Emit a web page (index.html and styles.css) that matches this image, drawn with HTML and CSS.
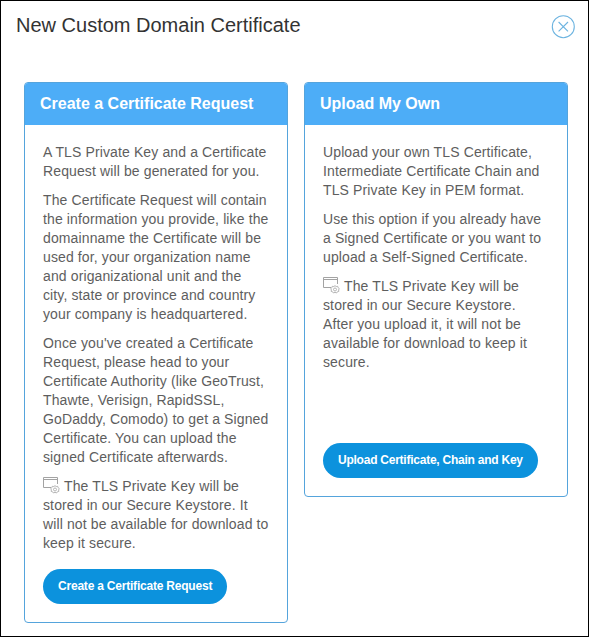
FILE: index.html
```html
<!DOCTYPE html>
<html lang="en">
<head>
<meta charset="utf-8">
<title>New Custom Domain Certificate</title>
<link rel="stylesheet" href="styles.css">
</head>
<body>
<main class="dialog">
  <header class="dialog-header">
    <h1>New Custom Domain Certificate</h1>
    <button class="close" aria-label="Close">
      <svg width="24" height="24" viewBox="0 0 24 24"><circle cx="12.3" cy="11.7" r="11"/><path d="M7.6 7l9.4 9.4M17 7l-9.4 9.4"/></svg>
    </button>
  </header>
  <div class="cards">
    <section class="card">
      <h2>Create a Certificate Request</h2>
      <div class="card-body">
        <p>A TLS Private Key and a Certificate<br>Request will be generated for you.</p>
        <p>The Certificate Request will contain<br>the information you provide, like the<br>domainname the Certificate will be<br>used for, your organization name<br>and origanizational unit and the<br>city, state or province and country<br>your company is headquartered.</p>
        <p>Once you've created a Certificate<br>Request, please head to your<br>Certificate Authority (like GeoTrust,<br>Thawte, Verisign, RapidSSL,<br>GoDaddy, Comodo) to get a Signed<br>Certificate. You can upload the<br>signed Certificate afterwards.</p>
        <p><svg class="keystore" width="17" height="17" viewBox="0 0 17 17"><path d="M8 10.5H.5V.5h14v6.5M.5 2.5h14"/><path class="gear" d="M12 8.7l1.2.8 1.5-.2.4 1.4 1.2.9-.7 1.3.2 1.5-1.4.4-.9 1.2-1.5-.7-1.5.7-.9-1.2-1.4-.4.2-1.5-.7-1.3 1.2-.9.4-1.4 1.5.2z"/><circle class="gear" cx="12" cy="12.5" r="1.5"/></svg>The TLS Private Key will be<br>stored in our Secure Keystore. It<br>will not be available for download to<br>keep it secure.</p>
        <button class="action">Create a Certificate Request</button>
      </div>
    </section>
    <section class="card">
      <h2>Upload My Own</h2>
      <div class="card-body">
        <p>Upload your own TLS Certificate,<br>Intermediate Certificate Chain and<br>TLS Private Key in PEM format.</p>
        <p>Use this option if you already have<br>a Signed Certificate or you want to<br>upload a Self-Signed Certificate.</p>
        <p><svg class="keystore" width="17" height="17" viewBox="0 0 17 17"><path d="M8 10.5H.5V.5h14v6.5M.5 2.5h14"/><path class="gear" d="M12 8.7l1.2.8 1.5-.2.4 1.4 1.2.9-.7 1.3.2 1.5-1.4.4-.9 1.2-1.5-.7-1.5.7-.9-1.2-1.4-.4.2-1.5-.7-1.3 1.2-.9.4-1.4 1.5.2z"/><circle class="gear" cx="12" cy="12.5" r="1.5"/></svg>The TLS Private Key will be<br>stored in our Secure Keystore.<br>After you upload it, it will not be<br>available for download to keep it<br>secure.</p>
        <button class="action upload">Upload Certificate, Chain and Key</button>
      </div>
    </section>
  </div>
</main>
</body>
</html>
```
FILE: styles.css
```css
* { box-sizing: border-box; }
body {
  margin: 0;
  background: #fff;
  font-family: "Liberation Sans", Arial, sans-serif;
  color: #5e5e5e;
}
.dialog {
  height: 637px;
  border: 1px solid #000;
}
.dialog-header {
  height: 81px;
  padding: 12px 13px 0 15px;
  display: flex;
  justify-content: space-between;
  align-items: flex-start;
}
h1 {
  margin: 0;
  font-size: 20px;
  line-height: 24px;
  font-weight: 400;
  color: #333;
}
.close {
  width: 24px;
  height: 24px;
  margin-top: 2px;
  padding: 0;
  border: 0;
  background: none;
}
.close svg { display: block; fill: none; stroke: #6db4e0; stroke-width: 1.1; }
.cards {
  display: flex;
  align-items: flex-start;
  gap: 16px;
  padding-left: 23px;
}
.card {
  width: 264px;
  border: 1px solid #55a4dc;
  border-radius: 4px;
  overflow: hidden;
  white-space: nowrap;
}
h2 {
  margin: -1px -1px 0;
  height: 43px;
  padding-left: 16px;
  background: #4dadf7;
  color: #fff;
  font-size: 16px;
  line-height: 43px;
}
.card-body { padding: 18px; }
p {
  margin: 0 0 10px;
  font-size: 14px;
  line-height: 19px;
  letter-spacing: 0.12px;
}
.keystore {
  margin: 0 4px -1px 0;
  height: 17px;
  vertical-align: -2px;
  fill: none;
  stroke: #a3a3a3;
}
.gear { stroke-width: 0.8; }
.action {
  display: block;
  height: 35px;
  margin-top: 16px;
  padding: 0 15px;
  border: 0;
  border-radius: 18px;
  background: #0c92dd;
  color: #fff;
  font: bold 12px/35px "Liberation Sans", Arial, sans-serif;
  letter-spacing: -0.21px;
}
.upload { margin-top: 71px; letter-spacing: -0.24px; }
```
